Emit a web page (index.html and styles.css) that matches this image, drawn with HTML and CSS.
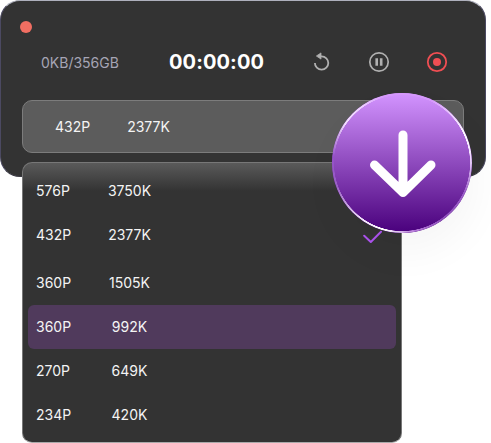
FILE: index.html
```
<!DOCTYPE html>
<html>
<head>
  <meta charset="UTF-8">
  <title>Screen Recorder</title>
  <meta name="viewport" content="width=device-width, initial-scale=1.0">
  <link rel="stylesheet" href="styles.css">
</head>
<body>
  <div class="recorder">
    <div class="panel">
      <div class="close-dot"></div>
      <div class="toolbar">
        <span class="storage">0KB/356GB</span>
        <span class="timer">00:00:00</span>
        <div class="controls">
          <svg class="icon" width="22" height="22" viewBox="0 0 22 22">
            <path d="M4.9 12A6.7 6.7 0 1 0 11.6 5.3H9" fill="none" stroke="#b0b0b0" stroke-width="1.8"/>
            <path d="M6.4 5L11 1.9V8.1Z" fill="#b0b0b0" stroke="#b0b0b0" stroke-width="0.8" stroke-linejoin="round"/>
          </svg>
          <svg class="icon" width="22" height="22" viewBox="0 0 22 22">
            <circle cx="11" cy="11" r="9.2" fill="none" stroke="#b0b0b0" stroke-width="1.7"/>
            <path d="M8.7 7.2V14.8M13.2 7.2V14.8" stroke="#b0b0b0" stroke-width="2.6"/>
          </svg>
          <svg class="icon" width="22" height="22" viewBox="0 0 22 22">
            <circle cx="11" cy="11" r="9.2" fill="none" stroke="#f04e53" stroke-width="1.8"/>
            <circle cx="11" cy="11" r="4" fill="#f04e53"/>
          </svg>
        </div>
      </div>
      <div class="selected">
        <span class="size">432P</span>
        <span class="rate">2377K</span>
      </div>
    </div>

    <div class="menu">
      <div class="option"><span class="size">576P</span><span class="rate">3750K</span></div>
      <div class="option checked">
        <span class="size">432P</span><span class="rate">2377K</span>
        <svg class="check" width="20" height="14" viewBox="0 0 20 14">
          <path d="M1.2 5.8L7.8 12L18 1.8" fill="none" stroke="#ad53ef" stroke-width="2" stroke-linecap="round" stroke-linejoin="round"/>
        </svg>
      </div>
      <div class="option"><span class="size">360P</span><span class="rate">1505K</span></div>
      <div class="option active"><span class="size">360P</span><span class="rate">992K</span></div>
      <div class="option"><span class="size">270P</span><span class="rate">649K</span></div>
      <div class="option"><span class="size">234P</span><span class="rate">420K</span></div>
    </div>

    <div class="download">
      <svg width="140" height="140" viewBox="0 0 140 140">
        <path d="M71 42V99.5M42.5 72L71 99.5L99 72" fill="none" stroke="#fff" stroke-width="9" stroke-linecap="round" stroke-linejoin="round"/>
      </svg>
    </div>
  </div>
</body>
</html>
```
FILE: styles.css
```
body {
  font-family: Inter, 'Liberation Sans', sans-serif;
  background: #fff;
  margin: 0;
  overflow: hidden;
}

.recorder {
  position: relative;
  width: 486px;
  height: 443px;
}

.panel {
  box-sizing: border-box;
  height: 177px;
  padding: 20px 21px 0;
  background: #333;
  border: 1px solid #4b4961;
  border-top-color: #aeb0bd;
  border-bottom-color: #3c3b45;
  border-radius: 20px;
}

.close-dot {
  width: 12px;
  height: 12px;
  margin-left: -2px;
  border-radius: 50%;
  background: #f16e62;
}

.toolbar {
  display: flex;
  align-items: center;
  height: 24px;
  margin-top: 17px;
  padding-left: 19px;
}

.storage {
  width: 128px;
  color: #a6a5b5;
  font-size: 14px;
}

.timer {
  width: 141px;
  color: #fff;
  font-size: 20px;
  font-weight: 700;
  letter-spacing: 0.1px;
}

.controls {
  display: flex;
  gap: 36px;
}

.icon,
.check,
.download svg {
  display: block;
}

.selected {
  display: flex;
  align-items: center;
  box-sizing: border-box;
  height: 53px;
  margin-top: 26px;
  padding-left: 32px;
  background: #5c5c5c;
  border: 1px solid #7c7c7c;
  border-radius: 10px;
  color: #f4f4f4;
  font-size: 14px;
}

.size {
  width: 70px;
}

.rate {
  width: 47px;
  text-align: center;
}

/* open list, overlaps the bottom of the panel */
.menu {
  position: absolute;
  top: 162px;
  left: 22px;
  box-sizing: border-box;
  width: 380px;
  height: 281px;
  padding: 6px 5px 5px;
  background: linear-gradient(#5a5a5a 0, #333 28px);
  border: 1px solid #777;
  border-bottom-color: #aaa;
  border-radius: 10px;
  color: #f4f4f4;
  font-size: 14px;
}

.option {
  display: flex;
  align-items: center;
  box-sizing: border-box;
  height: 44px;
  padding: 0 13px 2px 8px;
  border-radius: 6px;
}

.option.checked {
  margin-bottom: 4px;
}

.option.active {
  background: #503a5c;
}

.check {
  margin: 5px 0 0 auto;
}

.download {
  position: absolute;
  top: 92.5px;
  left: 332px;
  width: 140px;
  height: 140px;
  border-radius: 50%;
  background: linear-gradient(#d394ff, #49007c);
  box-shadow: 4px 20px 40px rgba(0, 0, 0, 0.04);
}

/* shiny rim */
.download::before {
  content: "";
  position: absolute;
  inset: 0;
  border-radius: 50%;
  background: conic-gradient(#d598fb 0deg, #d598fb 25deg, #fff 65deg, #f1dcff 85deg, #9b5fc8 115deg, #8d50b8 145deg, #b57ad8 170deg, #fff 195deg, #f3e6fa 215deg, #9a62c4 250deg, #9450c9 275deg, #f3e0ff 305deg, #ecd0ff 325deg, #d598fb 345deg);
  -webkit-mask: radial-gradient(circle closest-side, transparent 67.8px, #000 68.3px);
  mask: radial-gradient(circle closest-side, transparent 67.8px, #000 68.3px);
}
```
